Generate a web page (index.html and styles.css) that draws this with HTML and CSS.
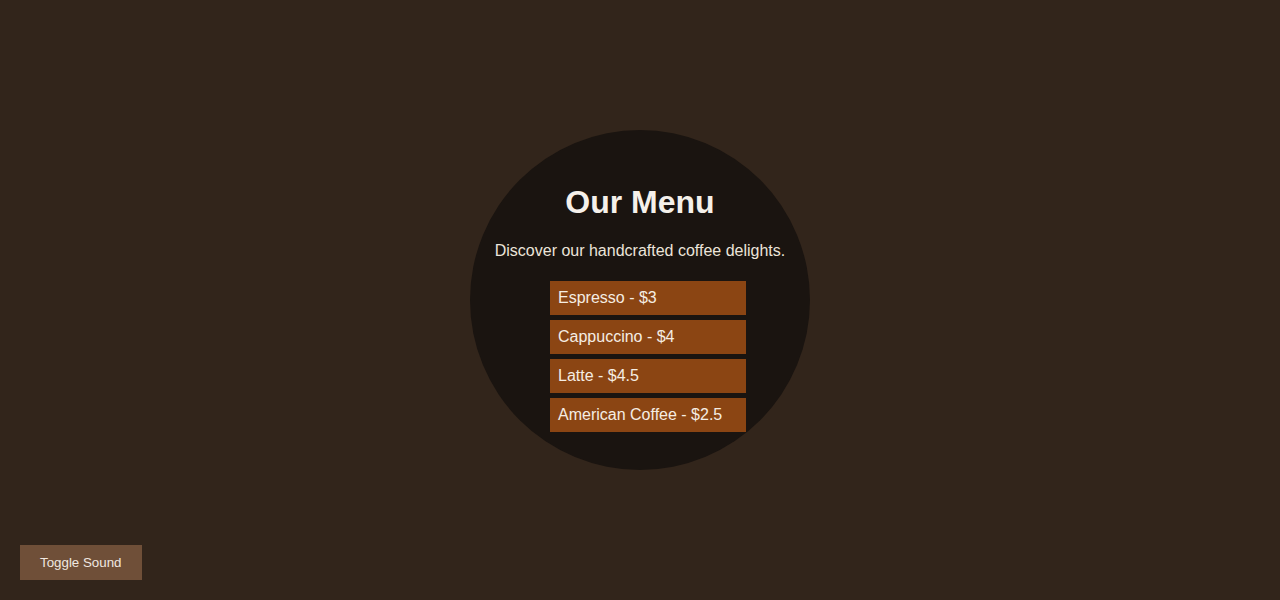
FILE: index.html
```
<!DOCTYPE html>
<html lang="en">
<head>
<meta charset="utf-8">
<title>Our Menu</title>
<link rel="stylesheet" href="styles.css">
</head>
<body>
<main class="stage">
  <section class="circle">
    <h1 class="title">Our Menu</h1>
    <p class="lead">Discover our handcrafted coffee delights.</p>
    <ul class="menu">
      <li class="item">Espresso - $3</li>
      <li class="item">Cappuccino - $4</li>
      <li class="item">Latte - $4.5</li>
      <li class="item">American Coffee - $2.5</li>
    </ul>
  </section>
</main>
<footer class="controls">
  <button class="sound-btn" type="button">Toggle Sound</button>
</footer>
</body>
</html>
```
FILE: styles.css
```
html, body {
  margin: 0;
  padding: 0;
  height: 100%;
}
body {
  background: #32251b;
  font-family: "Liberation Sans", Arial, sans-serif;
  color: #f3ece4;
  display: flex;
  flex-direction: column;
  overflow: hidden;
}
.stage {
  height: 600px;
  display: flex;
  justify-content: center;
  align-items: center;
}
.circle {
  width: 340px;
  height: 340px;
  box-sizing: border-box;
  padding-top: 15px;
  border-radius: 50%;
  background: #1a1410;
  display: flex;
  flex-direction: column;
  align-items: center;
  justify-content: center;
}
.title {
  margin: 0 0 21px;
  font-size: 32px;
  font-weight: bold;
  line-height: 37px;
  color: #f5f0ea;
}
.lead {
  margin: 0 0 21px;
  font-size: 16px;
  line-height: 18px;
  color: #ece4da;
}
.menu {
  list-style: none;
  margin: 0;
  padding: 0 0 0 16px;
  display: flex;
  flex-direction: column;
  gap: 5px;
}
.item {
  width: 196px;
  box-sizing: border-box;
  padding: 8px 8px;
  font-size: 16px;
  line-height: 18px;
  background: #8b4513;
  color: #f5ede3;
}
.controls {
  position: absolute;
  left: 20px;
  top: 545px;
}
.sound-btn {
  background: #6f4f38;
  color: #f0e8e0;
  border: none;
  padding: 10px 20px;
  font-family: "Liberation Sans", Arial, sans-serif;
  font-size: 13.333px;
  line-height: 15px;
  cursor: pointer;
}
```
